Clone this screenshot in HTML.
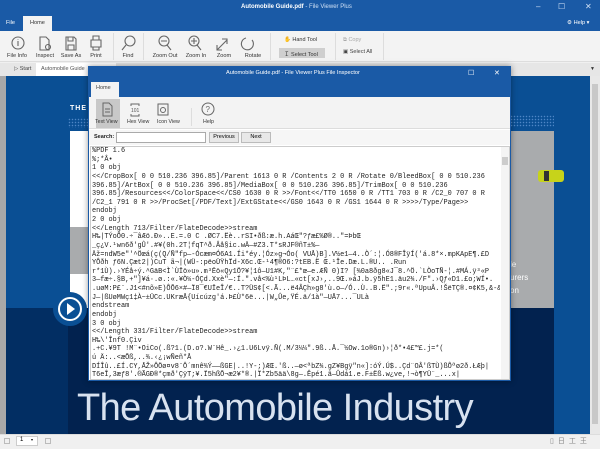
<!DOCTYPE html>
<html><head><meta charset="utf-8"><style>
*{margin:0;padding:0;box-sizing:border-box}
body{width:600px;height:449px;overflow:hidden;position:relative;font-family:"Liberation Sans",sans-serif;font-size:7px;background:#f0f0f0}
.a{position:absolute}
.mono{font-family:"Liberation Mono",monospace;font-size:6.9px;line-height:8.62px;color:#222;white-space:pre;overflow:hidden}
.tb{position:absolute;top:53px;font-size:5.6px;color:#333;text-align:center;white-space:nowrap}
</style></head><body>
<div class="a" style="left:0;top:0;width:600px;height:31px;background:#1a5aa6"></div>
<div class="a" style="left:241px;top:4px;color:#fff;font-size:6px;font-weight:bold">Automobile Guide.pdf <span style="font-weight:normal;color:#cfe0f5">- File Viewer Plus</span></div>
<div class="a" style="left:536px;top:2px;color:#cfe0f5;font-size:8px">–</div>
<div class="a" style="left:558px;top:2px;color:#cfe0f5;font-size:8px">☐</div>
<div class="a" style="left:585px;top:2px;color:#cfe0f5;font-size:8px">✕</div>
<div class="a" style="left:6px;top:20px;color:#fff;font-size:5.6px">File</div>
<div class="a" style="left:23px;top:16px;width:29px;height:15px;background:#f3f3f3;color:#333;font-size:5.6px;padding:4px 0 0 7px">Home</div>
<div class="a" style="left:567px;top:20px;color:#fff;font-size:5.6px">⚙ Help ▾</div>
<div class="a" style="left:0;top:31px;width:600px;height:31px;background:#f3f3f3;border-bottom:1px solid #ddd"></div>
<svg class="a" style="left:0;top:34px" width="270" height="18" fill="none" stroke="#666" stroke-width="1.1">
<circle cx="18" cy="9" r="6"/><path d="M18 7v5M18 5v.5"/>
<path d="M40 3h6l3 3v10h-9z"/><circle cx="48" cy="13" r="2.5"/>
<path d="M66 3h8l2 2v11h-10z M68 3v4h5v-4 M68 16v-5h6v5"/>
<path d="M91 6h10v7h-10z M93 6v-4h6v4 M93 13v3h6v-3"/>
<circle cx="130" cy="7" r="5"/><path d="M126 11l-4 5"/>
<circle cx="164" cy="7" r="5"/><path d="M167 11l4 5M161 7h6"/>
<circle cx="194" cy="7" r="5"/><path d="M197 11l4 5M191 7h6M194 4v6"/>
<path d="M217 16l10-10M222 5h5v5M217 11v5h5"/>
<path d="M246 4a6 6 0 1 0 6 2"/>
</svg>
<div class="tb" style="left:4px;width:26px">File Info</div>
<div class="tb" style="left:34px;width:22px">Inspect</div>
<div class="tb" style="left:60px;width:22px">Save As</div>
<div class="tb" style="left:88px;width:16px">Print</div>
<div class="a" style="left:113px;top:33px;width:1px;height:27px;background:#ddd"></div>
<div class="tb" style="left:120px;width:16px">Find</div>
<div class="a" style="left:143px;top:33px;width:1px;height:27px;background:#ddd"></div>
<div class="tb" style="left:150px;width:30px">Zoom Out</div>
<div class="tb" style="left:184px;width:24px">Zoom In</div>
<div class="tb" style="left:215px;width:18px">Zoom</div>
<div class="tb" style="left:243px;width:20px">Rotate</div>
<div class="a" style="left:270px;top:33px;width:1px;height:27px;background:#ddd"></div>
<div class="a" style="left:284px;top:37px;font-size:5.5px;color:#333">✋ Hand Tool</div>
<div class="a" style="left:279px;top:48px;width:46px;height:10px;background:#cfcfcf;font-size:5.5px;color:#333;padding:2px 0 0 5px">Ｉ Select Tool</div>
<div class="a" style="left:335px;top:33px;width:1px;height:27px;background:#ddd"></div>
<div class="a" style="left:343px;top:37px;font-size:5.5px;color:#aaa">⧉ Copy</div>
<div class="a" style="left:343px;top:49px;font-size:5.5px;color:#444">▣ Select All</div>
<div class="a" style="left:383px;top:33px;width:1px;height:27px;background:#ddd"></div>
<div class="a" style="left:0;top:63px;width:600px;height:13px;background:#e6e6e6"></div>
<div class="a" style="left:14px;top:66px;font-size:5.5px;color:#444">▷ Start</div>
<div class="a" style="left:36px;top:63px;width:80px;height:13px;background:#fff;font-size:5.5px;color:#555;padding:3px 0 0 5px">Automobile Guide</div>
<div class="a" style="left:590px;top:66px;font-size:5px;color:#333">▼</div>
<div class="a" style="left:0;top:76px;width:6px;height:360px;background:#a8a8a8"></div>
<div class="a" style="left:6px;top:76px;width:584px;height:232px;background:#0a4f94"></div>
<div class="a" style="left:6px;top:308px;width:62px;height:126px;background:#022e63"></div>
<div class="a" style="left:68px;top:308px;width:486px;height:126px;background:#02224f"></div>
<div class="a" style="left:554px;top:308px;width:36px;height:126px;background:#0a4f94"></div>
<div class="a" style="left:70px;top:105px;font-size:7px;font-weight:bold;color:#fff;letter-spacing:1px">THE</div>
<div class="a" style="left:68px;top:118px;width:22px;height:10px;background:radial-gradient(circle,#4f86c6 0.6px,transparent 0.9px) 0 0/3px 3px"></div>
<div class="a" style="left:510px;top:115px;width:44px;height:12px;background:radial-gradient(circle,#4f86c6 0.6px,transparent 0.9px) 0 0/3px 3px"></div>
<div class="a" style="left:70px;top:131px;width:484px;height:177px;background:#fff"></div>
<div class="a" style="left:70px;top:227px;width:484px;height:47px;background:#a9abad"></div>
<div class="a" style="left:500px;top:131px;width:54px;height:177px;background:#a9abad"></div>
<div class="a" style="left:510px;top:258px;color:#fff;font-size:8px;line-height:13px">le<br>urers<br>on</div>
<div class="a" style="left:538px;top:170px;width:26px;height:12px;background:#c7d31a;border-radius:3px"></div>
<div class="a" style="left:544px;top:171px;width:5px;height:10px;background:#333"></div>
<div class="a" style="left:53px;top:292px;width:34px;height:34px;border-radius:50%;background:#0a4f94"></div>
<div class="a" style="left:58px;top:297px;width:24px;height:24px;border-radius:50%;border:2px solid #fff"></div>
<div class="a" style="left:67px;top:303px;width:0;height:0;border-left:8px solid #fff;border-top:6px solid transparent;border-bottom:6px solid transparent"></div>
<div class="a" style="left:77px;top:387px;color:#d8e2f0;font-size:38px;font-weight:100;letter-spacing:-0.6px;white-space:nowrap">The Automobile Industry</div>
<div class="a" style="left:590px;top:76px;width:10px;height:360px;background:#e8e8e8"></div>
<div class="a" style="left:592px;top:84px;width:6px;height:340px;background:#c8c8c8"></div>
<div class="a" style="left:0;top:434px;width:600px;height:15px;background:#f0f0f0;border-top:1px solid #ddd"></div>
<div class="a" style="left:4px;top:438px;width:6px;height:6px;border:1px solid #bbb"></div>
<div class="a" style="left:16px;top:436px;width:22px;height:10px;background:#fff;border:1px solid #ccc;font-size:6px;padding-left:3px">1 <span style="font-size:4px;margin-left:6px">▾</span></div>
<div class="a" style="left:45px;top:438px;width:6px;height:6px;border:1px solid #bbb"></div>
<div class="a" style="left:550px;top:436px;font-size:7px;color:#888;letter-spacing:4px">▯日工王</div>
<div class="a" style="left:88px;top:66px;width:423px;height:315px;background:#fff;border:1px solid #1a5aa6;box-shadow:0 0 6px rgba(0,0,0,.4)"></div>
<div class="a" style="left:88px;top:66px;width:423px;height:31px;background:#1a5aa6"></div>
<div class="a" style="left:226px;top:70px;color:#fff;font-size:5.6px">Automobile Guide.pdf - File Viewer Plus File Inspector</div>
<div class="a" style="left:468px;top:69px;color:#fff;font-size:7px">☐</div>
<div class="a" style="left:494px;top:69px;color:#fff;font-size:7px">✕</div>
<div class="a" style="left:91px;top:82px;width:28px;height:15px;background:#f3f3f3;font-size:5.5px;color:#444;padding:3px 0 0 5px">Home</div>
<div class="a" style="left:89px;top:97px;width:421px;height:32px;background:#f3f3f3;border-bottom:1px solid #ddd"></div>
<div class="a" style="left:96px;top:99px;width:24px;height:29px;background:#c8c8c8"></div>
<svg class="a" style="left:95px;top:100px" width="120" height="18" fill="none" stroke="#666" stroke-width="1">
<path d="M8 3h6l3 3v10h-9z M10 9h5M10 12h5"/>
<path d="M36 6v-2h8v2 M36 14v2h8v-2"/><text x="36" y="12" font-size="5" fill="#555" stroke="none" font-family="Liberation Sans">101</text>
<path d="M63 4h10v11h-10z"/><circle cx="68" cy="10" r="2.5"/>
<circle cx="113" cy="9" r="6"/><text x="110.5" y="12" font-size="8" fill="#666" stroke="none" font-family="Liberation Sans">?</text>
</svg>
<div class="a" style="left:95px;top:119px;font-size:5.3px;color:#333">Text View</div>
<div class="a" style="left:127px;top:119px;font-size:5.3px;color:#333">Hex View</div>
<div class="a" style="left:157px;top:119px;font-size:5.3px;color:#333">Icon View</div>
<div class="a" style="left:191px;top:108px;width:1px;height:18px;background:#ddd"></div>
<div class="a" style="left:203px;top:119px;font-size:5.3px;color:#333">Help</div>
<div class="a" style="left:89px;top:130px;width:421px;height:15px;background:#f6f6f6"></div>
<div class="a" style="left:94px;top:134px;font-size:5.5px;font-weight:bold;color:#222">Search:</div>
<div class="a" style="left:116px;top:132px;width:90px;height:11px;background:#fff;border:1px solid #aaa"></div>
<div class="a" style="left:209px;top:132px;width:30px;height:11px;background:#e8e8e8;border:1px solid #bbb;font-size:5.5px;text-align:center;line-height:9px">Previous</div>
<div class="a" style="left:241px;top:132px;width:30px;height:11px;background:#e8e8e8;border:1px solid #bbb;font-size:5.5px;text-align:center;line-height:9px">Next</div>
<div class="a" style="left:90px;top:146px;width:420px;height:234px;border:1px solid #ccc;background:#fff"></div>
<div class="a" style="left:501px;top:147px;width:8px;height:232px;background:#f4f4f4"></div>
<div class="a" style="left:502px;top:157px;width:6px;height:8px;background:#ccc"></div>
<div class="a mono" style="left:92px;top:147px;width:408px;height:232px">%PDF 1.6
%;*Â•
1 0 obj
&lt;&lt;/CropBox[ 0 0 510.236 396.85]/Parent 1613 0 R /Contents 2 0 R /Rotate 0/BleedBox[ 0 0 510.236
396.85]/ArtBox[ 0 0 510.236 396.85]/MediaBox[ 0 0 510.236 396.85]/TrimBox[ 0 0 510.236
396.85]/Resources&lt;&lt;/ColorSpace&lt;&lt;/CS0 1630 0 R &gt;&gt;/Font&lt;&lt;/TT0 1650 0 R /TT1 703 0 R /C2_0 707 0 R
/C2_1 791 0 R &gt;&gt;/ProcSet[/PDF/Text]/ExtGState&lt;&lt;/GS0 1643 0 R /GS1 1644 0 R &gt;&gt;&gt;&gt;/Type/Page&gt;&gt;
endobj
2 0 obj
&lt;&lt;/Length 713/Filter/FlateDecode&gt;&gt;stream
H‰|TÝoÔ0.÷¯âÆö.Ð»..E.=.0 C .ØC7.Ëè..rSI•ðß:æ.h.AáŒ"?ƒæ£%Ø®.."=ÞbŒ
_ç¿V.¹wn6ð'gÛ'.#¥(0h.2T¦fqT^ð.Âå§ic.wÄ—#Z3.T*sRJF®ñT±%—
Äž=ndW5e"'^Öœá(ç(Q/Ñ"fp—-Ócæm¤Ó6A1.Íi*éy.¦Óz»g¬Óo( VUÅ)B].V½e1—4..Ò´:¦.Ó8®FÎÿÍ('á.8*×.mpKApE¶.£D
YÔðh ƒ6N.Çæt2|)CuT ã¬|(WÜ-:pëoÜŸhÏd-X6c.Œ-¹4¶®O6:?tEB.Ë Œ.¹Îe.Dæ.L.®U.. .Run
r*1Ù).›YÉå÷ý.^GäB<Ì`ÙÏö»u».m³Ëö«Qy1Ö?¥¦1ô—U1#K,"¨£*œ—e.ÆÑ 0)I? [¾0a8ðg8«J¯8.^Ö.`LÒoTÑ-¦.#MÁ.ÿ³«P
3—fæ÷.§B,+"]¥á·.ø.:«.¥Ò¼-ÓÇd.Xxè"—:Í.".vå<%ù¹LÞL…«ct[xJ›,..9Œ.»áJ.b.ÿ5hE1.äu2¾./F".›Qƒ«D1.£o;WÍ•.
.uøM:P£¨.J1<#nõ»E)ÔÕ6×#—Ï8¯€UÏeÎ/€..T?ÜS¢[<.Ã...ë4ÂÇh»g8'ù.o—/Ó..Ù..B.Ë".;9r«.ªUpuÂ.!ŠëTÇ®.¤¢K5,&amp;-&amp;
J—|ßUøMWç1‡À~±ÜCc.UKræÅ{Uícúzg'á.Þ£Ù*6ë...|W„Ûe,ŸÉ.ä/1à"—UÅ7...¯ULà
endstream
endobj
3 0 obj
&lt;&lt;/Length 331/Filter/FlateDecode&gt;&gt;stream
H‰\'Înf0.Çìv
.+C.¥9T !M¨•OiCo(.ß?1.(D.o?.W¨Hê_.›¿1.U6Lvÿ.Ñ(.M/3¼¼".9ß..Å.¯½Ow.1o®Gn)›¦ð*•4£™£.j=*(
ú Ä:..&lt;æÕß,..¾.‹¿¡wÑeñ*Å
DÍÎû..£Í.CY,ÅŽ»ÔÖø¤v8¨Ô´mnê¾Ý——ßGE|..!Y-;)ÆŒ.'ß..—ø<ªbZ¾.gZ¥Bgÿ"n«]:óÝ.Ú$..Çd¨OÂ'ßTÙ)ßÔªø2ð.ŁÆþ|
T6eÎ,3æƒ8'.®ÃGÐ®*çmð'ÇÿT;¥.Ï5hßÕ¬æ2¥*®.|Ï*Zb5ää\8g—.Êpé1.â—Ûdá1.e.F±Ëß.w¿ve,!¬ò¶YÜ¨_...x|
endstream</div>
</body></html>
